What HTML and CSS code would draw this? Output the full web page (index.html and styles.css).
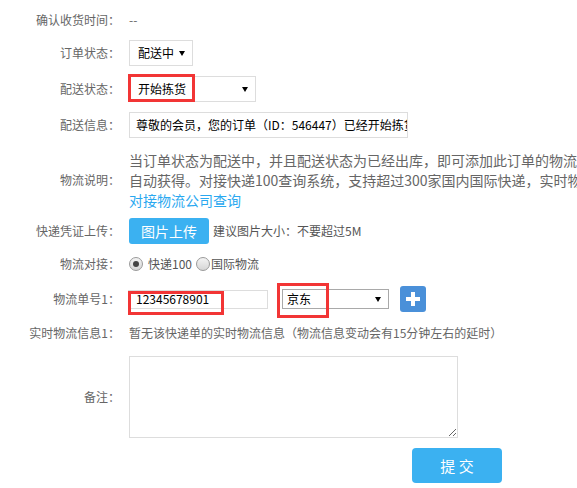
FILE: index.html
```html
<!DOCTYPE html>
<html lang="zh-CN">
<head>
<meta charset="utf-8">
<title>物流信息</title>
<link rel="stylesheet" href="styles.css">
</head>
<body>
<div class="form">
  <div class="row r1">
    <div class="lbl">确认收货时间：</div>
    <div class="val plain">--</div>
  </div>
  <div class="row r2">
    <div class="lbl">订单状态：</div>
    <div class="val">
      <div class="sel sel-s"><span class="sel-text">配送中</span><span class="caret"></span></div>
    </div>
  </div>
  <div class="row r3">
    <div class="lbl">配送状态：</div>
    <div class="val mark-wrap">
      <div class="sel sel-m"><span class="sel-text">开始拣货</span><span class="caret"></span></div>
      <span class="mark mark-a"></span>
    </div>
  </div>
  <div class="row r4">
    <div class="lbl">配送信息：</div>
    <div class="val">
      <div class="txt txt-wide">尊敬的会员，您的订单（ID：546447）已经开始拣货，请耐心等待。</div>
    </div>
  </div>
  <div class="row r5">
    <div class="lbl">物流说明：</div>
    <div class="val desc">
      <div class="line">当订单状态为配送中，并且配送状态为已经出库，即可添加此订单的物流信息，</div>
      <div class="line">自动获得。对接快递100查询系统，支持超过300家国内国际快递，实时物流信息。</div>
      <div class="line"><a class="link" href="#">对接物流公司查询</a></div>
    </div>
  </div>
  <div class="row r6">
    <div class="lbl">快递凭证上传：</div>
    <div class="val inline">
      <span class="btn btn-upload">图片上传</span>
      <span class="hint">建议图片大小：不要超过5M</span>
    </div>
  </div>
  <div class="row r7">
    <div class="lbl">物流对接：</div>
    <div class="val inline">
      <span class="radio checked"></span><span class="radio-text">快递100</span>
      <span class="radio radio-2"></span><span class="radio-text">国际物流</span>
    </div>
  </div>
  <div class="row r8">
    <div class="lbl">物流单号1：</div>
    <div class="val inline">
      <div class="mark-wrap">
        <div class="txt txt-no">12345678901</div>
        <span class="mark mark-b"></span>
      </div>
      <div class="mark-wrap">
        <div class="sel sel-jd"><span class="sel-text">京东</span><span class="caret"></span></div>
        <span class="mark mark-c"></span>
      </div>
      <span class="plus">
        <svg width="26" height="26" viewBox="0 0 26 26" aria-hidden="true"><rect x="11" y="6" width="4" height="14" fill="#fff"/><rect x="6" y="11" width="14" height="4" fill="#fff"/></svg>
      </span>
    </div>
  </div>
  <div class="row r9">
    <div class="lbl">实时物流信息1：</div>
    <div class="val plain">暂无该快递单的实时物流信息（物流信息变动会有15分钟左右的延时）</div>
  </div>
  <div class="row r10">
    <div class="lbl">备注：</div>
    <div class="val">
      <textarea class="memo"></textarea>
    </div>
  </div>
  <div class="submit-row">
    <span class="btn btn-submit">提 交</span>
  </div>
</div>
</body>
</html>
```
FILE: styles.css
```css
html, body {
  overflow: hidden;
}
body {
  margin: 0;
  background: #fff;
  font-family: "Noto Sans CJK SC", "Microsoft YaHei", sans-serif;
  font-size: 12px;
  line-height: 20px;
  color: #666;
}
.form {
  padding-top: 10px;
}
.row {
  display: flex;
  align-items: center;
}
.lbl {
  width: 120px;
  flex: none;
  text-align: right;
  color: #666;
  white-space: nowrap;
}
.val {
  margin-left: 9px;
}
.plain {
  white-space: nowrap;
}
.inline {
  display: flex;
  align-items: center;
}

.r1 { height: 20px; }
.r2 { margin-top: 10px; height: 26px; }
.r3 { margin-top: 10px; height: 26px; }
.r4 { margin-top: 10px; height: 26px; }
.r5 { margin-top: 12px; }
.r6 { margin-top: 8px; height: 26px; }
.r7 { margin-top: 10px; height: 20px; }
.r8 { margin-top: 12px; height: 26px; }
.r9 { margin-top: 11px; height: 20px; }
.r10 { margin-top: 13px; }

/* fake selects */
.sel {
  position: relative;
  box-sizing: border-box;
  height: 26px;
  border: 1px solid #ddd;
  background: #fff;
  color: #000;
  display: flex;
  align-items: center;
  padding-left: 8px;
}
.sel-s { width: 64px; }
.sel-m { width: 127px; }
.sel-jd {
  width: 107px;
  height: 20px;
  border-color: #a9a9a9;
  padding-left: 4px;
  margin-left: 14px;
}
.caret {
  position: absolute;
  top: 50%;
  right: 7px;
  margin-top: -2px;
  width: 0;
  height: 0;
  border-left: 3px solid transparent;
  border-right: 3px solid transparent;
  border-top: 5px solid #000;
}
.sel-jd .caret { right: 7px; }

/* text inputs */
.txt {
  box-sizing: border-box;
  border: 1px solid #ddd;
  background: #fff;
  color: #000;
  white-space: nowrap;
  overflow: hidden;
  display: flex;
  align-items: center;
}
.txt-wide {
  width: 279px;
  height: 26px;
  padding-left: 6px;
}
.txt-no {
  width: 140px;
  height: 19px;
  padding-left: 7px;
  margin-left: -1px;
}

/* red annotation boxes */
.mark-wrap {
  position: relative;
}
.mark {
  position: absolute;
  box-sizing: border-box;
  border: 3px solid #f23535;
  pointer-events: none;
}
.mark-a { left: -1px; top: -2px; width: 67px; height: 28px; }
.mark-b { left: -1px; top: 1px; width: 96px; height: 24px; }
.mark-c { left: 9px; top: -6px; width: 52px; height: 35px; }

/* description */
.desc {
  font-size: 14px;
  line-height: 20px;
  color: #666;
}
.line {
  white-space: nowrap;
}
.link {
  color: #2aa8f0;
  text-decoration: none;
}

/* buttons */
.btn {
  display: inline-flex;
  align-items: center;
  justify-content: center;
  background: #3bb1f1;
  color: #fff;
  border-radius: 3px;
}
.btn-upload {
  width: 80px;
  height: 26px;
  font-size: 14px;
}
.hint {
  margin-left: 4px;
  color: #555;
  white-space: nowrap;
}

/* radios */
.radio {
  box-sizing: border-box;
  width: 14px;
  height: 14px;
  border-radius: 50%;
  border: 1px solid #9a9a9a;
  background: linear-gradient(#f4f4f4, #d6d6d6);
  flex: none;
  position: relative;
}
.radio.checked::after {
  content: "";
  position: absolute;
  left: 3px;
  top: 3px;
  width: 6px;
  height: 6px;
  border-radius: 50%;
  background: #444;
}
.radio-text {
  color: #555;
  margin-left: 5px;
  white-space: nowrap;
}
.radio-2 {
  margin-left: 4px;
}
.radio-2 + .radio-text {
  margin-left: 1px;
}

/* plus button */
.plus {
  width: 26px;
  height: 26px;
  margin-left: 11px;
  background: #4a90d9;
  border-radius: 3px;
  display: block;
}
.plus svg {
  display: block;
}

/* memo */
.memo {
  display: block;
  box-sizing: border-box;
  width: 329px;
  height: 82px;
  margin: 0;
  border: 1px solid #ddd;
  resize: both;
  font-family: inherit;
}

.submit-row {
  margin-top: 10px;
  padding-left: 412px;
}
.btn-submit {
  width: 90px;
  height: 35px;
  font-size: 15px;
  border-radius: 4px;
}
```
